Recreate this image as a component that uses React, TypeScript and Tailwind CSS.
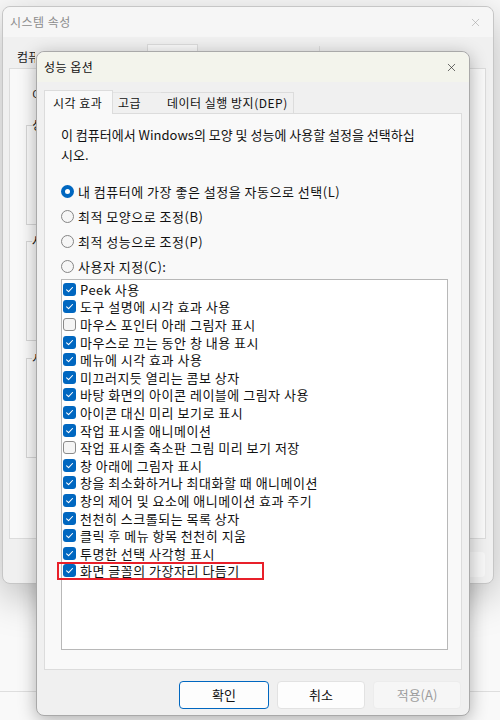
import { X } from "lucide-react";

const FONT = "font-['Noto_Sans_CJK_KR','Noto_Sans',sans-serif]";

const OPTIONS = [
  { label: "내 컴퓨터에 가장 좋은 설정을 자동으로 선택(L)", selected: true },
  { label: "최적 모양으로 조정(B)", selected: false },
  { label: "최적 성능으로 조정(P)", selected: false },
  { label: "사용자 지정(C):", selected: false },
];

const EFFECTS = [
  { label: "Peek 사용", checked: true },
  { label: "도구 설명에 시각 효과 사용", checked: true },
  { label: "마우스 포인터 아래 그림자 표시", checked: false },
  { label: "마우스로 끄는 동안 창 내용 표시", checked: true },
  { label: "메뉴에 시각 효과 사용", checked: true },
  { label: "미끄러지듯 열리는 콤보 상자", checked: true },
  { label: "바탕 화면의 아이콘 레이블에 그림자 사용", checked: true },
  { label: "아이콘 대신 미리 보기로 표시", checked: true },
  { label: "작업 표시줄 애니메이션", checked: true },
  { label: "작업 표시줄 축소판 그림 미리 보기 저장", checked: false },
  { label: "창 아래에 그림자 표시", checked: true },
  { label: "창을 최소화하거나 최대화할 때 애니메이션", checked: true },
  { label: "창의 제어 및 요소에 애니메이션 효과 주기", checked: true },
  { label: "천천히 스크롤되는 목록 상자", checked: true },
  { label: "클릭 후 메뉴 항목 천천히 지움", checked: true },
  { label: "투명한 선택 사각형 표시", checked: true },
  { label: "화면 글꼴의 가장자리 다듬기", checked: true },
];

const Checkbox = ({ checked }: { checked: boolean }) =>
  checked ? (
    <span className="flex h-[13px] w-[13px] shrink-0 items-center justify-center rounded-[3px] bg-[#0067c0]">
      <svg width="9" height="9" viewBox="0 0 9 9">
        <path
          d="M1.6 4.8 L3.6 6.7 L7.5 2.5"
          fill="none"
          stroke="white"
          strokeWidth="1.1"
          strokeLinecap="round"
          strokeLinejoin="round"
        />
      </svg>
    </span>
  ) : (
    <span className="h-[13px] w-[13px] shrink-0 rounded-[3px] border border-[#8a8a8a] bg-[#f5f5f5]" />
  );

const Radio = ({ selected }: { selected: boolean }) =>
  selected ? (
    <span className="flex h-[13px] w-[13px] shrink-0 items-center justify-center rounded-full bg-[#0067c0]">
      <span className="h-[5px] w-[5px] rounded-full bg-white" />
    </span>
  ) : (
    <span className="h-[13px] w-[13px] shrink-0 rounded-full border border-[#858585] bg-[#f6f6f6]" />
  );

// only the left strip of the background window is visible, so its labels are clipped there
const GroupBox = ({ label, className }: { label: string; className: string }) => (
  <div className={`h-[100px] w-[440px] border border-[#d6d6d6] ${className}`}>
    <div className="-mt-[8px] ml-[5px] w-[6px] overflow-hidden whitespace-nowrap bg-[#f9f9f9] leading-[14px]">
      {label}
    </div>
  </div>
);

const SystemProperties = () => (
  <div className="absolute left-[2px] top-[6px] flex h-[578px] w-[492px] flex-col rounded-[8px] border border-[#c6c6c6] bg-[#f0f0f0] shadow-[0_12px_40px_rgba(0,0,0,0.26)]">
    {/* Title bar (inactive) */}
    <div className="flex h-[30px] shrink-0 items-center justify-between rounded-t-[8px] bg-[#f6f6f6] pl-[7px] pr-[11px]">
      <span className="text-[12px] tracking-[0.5px] text-[#8d8d8d]">시스템 속성</span>
      <X size={13} strokeWidth={1} className="text-[#9a9a9a]" />
    </div>
    <div className="flex flex-1 flex-col px-[6px] pt-[9px]">
      <div className="flex h-[22px] items-end text-[12px] text-[#222]">
        <div className="flex h-[22px] w-[72px] items-center pl-[8px]">
          <span className="w-[18px] overflow-hidden whitespace-nowrap">컴퓨터 이름</span>
        </div>
        <div className="h-[22px] w-[66px]" />
        <div className="-mb-px h-[25px] w-[51px] border border-b-0 border-[#dcdcdc] bg-[#f9f9f9]" />
        <div className="h-[22px] w-[78px]" />
        <div className="h-[22px] w-[44px] border-r border-[#dcdcdc]" />
      </div>
      <div className="flex h-[471px] w-[477px] flex-col border border-[#dcdcdc] bg-[#f9f9f9] pl-[22px] pt-[17px] text-[12px] text-[#111]">
        <p className="w-[6px] overflow-hidden whitespace-nowrap leading-[18px]">이 내용을 변경하려면 관리자로 로그온해야 합니다.</p>
        <GroupBox label="성능" className="-ml-[6px] mt-[21px]" />
        <GroupBox label="사용자 프로필" className="-ml-[6px] mt-[16px]" />
        <GroupBox label="시작 및 복구" className="-ml-[6px] mt-[17px]" />
      </div>
      <div className="mt-[13px] flex justify-end gap-[8px] pr-[2px]">
        <div className="h-[25px] w-[80px] rounded-[4px] bg-[#fbfbfb]" />
        <div className="h-[25px] w-[80px] rounded-[4px] bg-[#fbfbfb]" />
        <div className="h-[25px] w-[80px] rounded-[4px] bg-[#f7f7f7]" />
      </div>
    </div>
  </div>
);

const PerformanceOptions = () => (
  <div className="absolute left-[36px] top-[51px] flex h-[665px] w-[434px] flex-col rounded-[8px] border border-[#a9a9a9] bg-[#f0f0f0] shadow-[0_4px_18px_rgba(0,0,0,0.3)]">
    {/* Title bar */}
    <div className="flex h-[30px] shrink-0 items-center justify-between rounded-t-[8px] bg-[#f3f4ec] pl-[7px] pr-[11px]">
      <span className="text-[12px] tracking-[0.5px] text-[#111]">성능 옵션</span>
      <X size={13} strokeWidth={1.2} className="text-[#222]" />
    </div>

    <div className="flex flex-1 flex-col px-[7px] pt-[8px]">
      {/* Tabs */}
      <div className="flex h-[23px] items-end text-[12px] tracking-[0.5px] text-[#111]">
        <div className="relative z-10 -mb-px flex h-[24px] w-[69px] items-center border border-b-0 border-[#dcdcdc] bg-[#f9f9f9] pl-[8px]">
          시각 효과
        </div>
        <div className="flex h-[21px] w-[48px] items-center border-t border-[#e4e4e4] pl-[5px]">고급</div>
        <div className="flex h-[21px] w-[133px] items-center border-r border-t border-[#dcdcdc] pl-[6px]">
          데이터 실행 방지(DEP)
        </div>
      </div>

      {/* Panel */}
      <div className="flex h-[557px] flex-col border border-[#dcdcdc] bg-[#f9f9f9] pl-[16px] pr-[13px] pt-[11px] text-[#111]">
        <p className="text-[13px] leading-[20px]">
          이 컴퓨터에서 Windows의 모양 및 성능에 사용할 설정을 선택하십
          <br />
          시오.
        </p>

        <div className="mt-[14px] flex flex-col">
          {OPTIONS.map((o) => (
            <div key={o.label} className="flex h-[25px] items-center gap-[4px] text-[13px] tracking-[0.5px]">
              <Radio selected={o.selected} />
              <span>{o.label}</span>
            </div>
          ))}
        </div>

        <div className="flex h-[371px] flex-col border border-[#b8b8b8] bg-white pl-[1px] pt-[0.5px]">
          {EFFECTS.map((e, i) => (
            <div
              key={e.label}
              className="relative flex h-[17.6px] items-center gap-[4px] text-[13px] leading-[17px] tracking-[0.5px] text-[#111]"
            >
              <Checkbox checked={e.checked} />
              <span className="whitespace-nowrap">{e.label}</span>
              {i === EFFECTS.length - 1 && (
                <span className="pointer-events-none absolute left-[-6px] top-[-0.5px] h-[18px] w-[207px] border-2 border-[#e8202a]" />
              )}
            </div>
          ))}
        </div>
      </div>

      {/* Buttons */}
      <div className="mt-[11px] flex justify-end gap-[8px] pr-[1px] text-[13px]">
        <button className="h-[28px] w-[90px] rounded-[4px] border border-[#0067c0] bg-[#fdfdfd] text-[#111]">
          확인
        </button>
        <button className="h-[28px] w-[88px] rounded-[4px] border border-[#e2e2e2] bg-[#fdfdfd] text-[#111]">
          취소
        </button>
        <button className="h-[28px] w-[88px] rounded-[4px] border border-[#ececec] bg-[#f6f6f6] text-[#9d9d9d]">
          적용(A)
        </button>
      </div>
    </div>
  </div>
);

export default function App() {
  return (
    <div className={`relative h-[720px] w-[500px] overflow-hidden bg-[#f9f9f9] ${FONT}`}>
      <div className="absolute left-0 right-0 top-[691px] h-px bg-[#dedede]" />
      <SystemProperties />
      <PerformanceOptions />
    </div>
  );
}
